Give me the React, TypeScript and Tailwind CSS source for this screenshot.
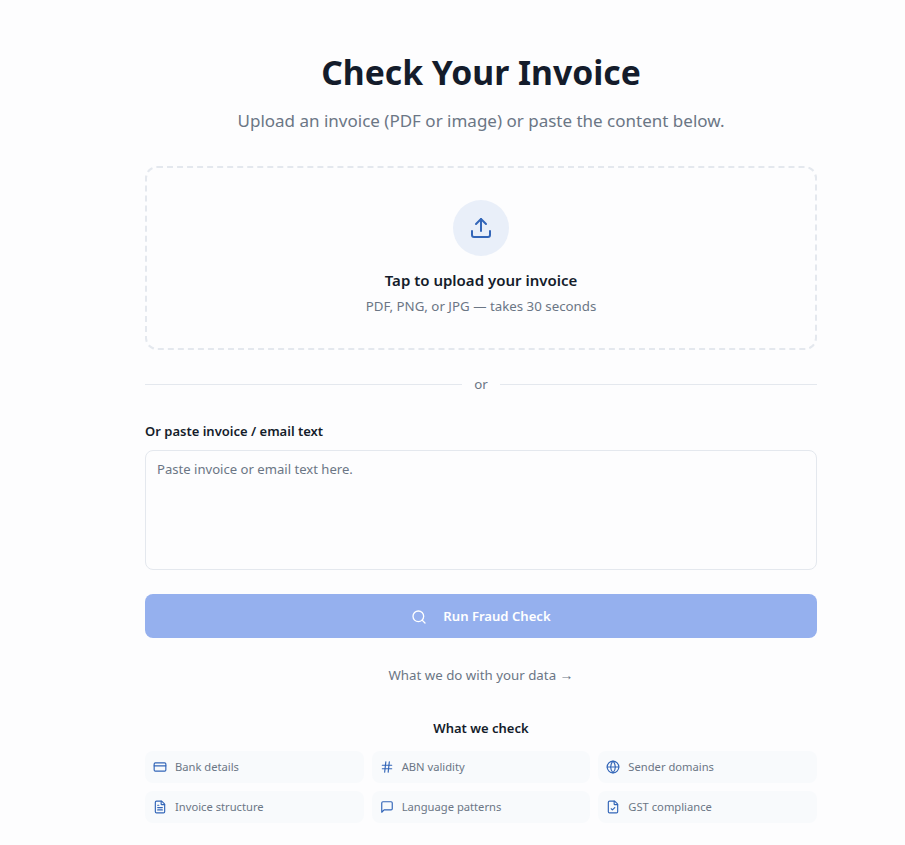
import { Upload, Search, CreditCard, Hash, Globe, FileText, FileCheck } from "lucide-react";

function MessageOld({ className }: { className?: string }) {
  return (
    <svg className={className} viewBox="0 0 24 24" fill="none" stroke="currentColor" strokeWidth={2} strokeLinecap="round" strokeLinejoin="round">
      <path d="M21 15a2 2 0 0 1-2 2H7l-4 4V5a2 2 0 0 1 2-2h14a2 2 0 0 1 2 2z" />
    </svg>
  );
}

const items = [
  { icon: CreditCard, label: "Bank details" },
  { icon: Hash, label: "ABN validity" },
  { icon: Globe, label: "Sender domains" },
  { icon: FileText, label: "Invoice structure" },
  { icon: MessageOld, label: "Language patterns" },
  { icon: FileCheck, label: "GST compliance" },
];

export default function App() {
  return (
    <div className="h-[845px] overflow-hidden bg-[#fdfdfe] pl-[145px] pt-[48px] font-['Noto_Sans',sans-serif]">
      <div className="w-[672px]">
        <h1 className="text-center text-[33.7px] leading-[48px] font-bold text-[#141c2b]">Check Your Invoice</h1>
        <p className="mt-[11px] text-center text-[17px] leading-[28px] text-[#6b7685]">Upload an invoice (PDF or image) or paste the content below.</p>

        <div className="mt-[31px] flex h-[184px] flex-col items-center rounded-xl border-2 border-dashed border-[#e4e8ee] pt-[32px]">
          <div className="flex h-14 w-14 items-center justify-center rounded-full bg-[#e9eff9]">
            <Upload className="h-6 w-6 text-[#3366b8]" strokeWidth={2} />
          </div>
          <div className="mt-[12px] text-[15px] leading-[24px] font-semibold text-[#141c2b]">Tap to upload your invoice</div>
          <div className="mt-[4px] text-[13.3px] leading-[20px] text-[#6b7685]">PDF, PNG, or JPG — takes 30 seconds</div>
        </div>

        <div className="mt-[24px] flex items-center gap-3">
          <div className="h-px flex-1 bg-[#e4e8ee]" />
          <span className="text-[13.3px] leading-[20px] text-[#6b7685]">or</span>
          <div className="h-px flex-1 bg-[#e4e8ee]" />
        </div>

        <div className="mt-[27px] text-[13px] leading-[20px] font-semibold text-[#141c2b]">Or paste invoice / email text</div>
        <div className="mt-[9px] h-[120px] rounded-lg border border-[#e4e8ee] px-[11px] py-[8px] text-[13.1px] leading-[20px] text-[#6b7685]">Paste invoice or email text here.</div>

        <button className="mt-[24px] flex h-[44px] w-full items-center justify-center gap-4 rounded-lg bg-[#95b0ee] pt-[1px] text-[13.1px] font-semibold text-white">
          <Search className="h-4 w-4" strokeWidth={2} />
          Run Fraud Check
        </button>

        <div className="mt-[27px] text-center text-[13.3px] leading-[20px] text-[#6b7685]">What we do with your data <span className="font-['Liberation_Sans',sans-serif] text-[14px]">→</span></div>

        <div className="mt-[33px] text-center text-[13px] leading-[20px] font-semibold text-[#141c2b]">What we check</div>

        <div className="mt-[13px] grid grid-cols-3 gap-2">
          {items.map(({ icon: Icon, label }) => (
            <div key={label} className="flex h-[32px] items-center gap-2 rounded-lg bg-[#f8fafc] px-[8px] text-[11.2px] text-[#6b7685]">
              <Icon className="h-[14px] w-[14px] shrink-0 text-[#3366b8]" />
              {label}
            </div>
          ))}
        </div>
      </div>
    </div>
  );
}
